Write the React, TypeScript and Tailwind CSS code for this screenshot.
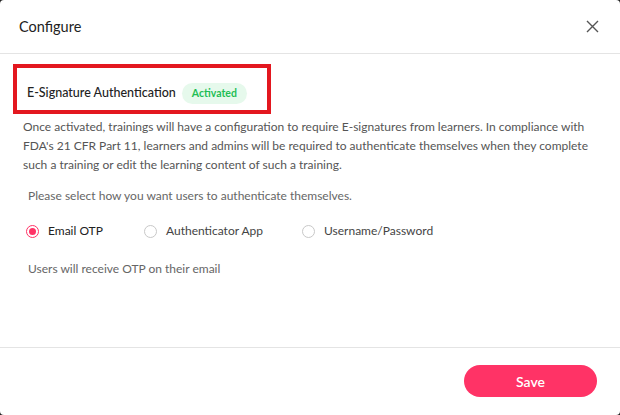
import React, { useState } from 'react';

const options = [
  { id: 'email', label: 'Email OTP', w: 'w-[118px]' },
  { id: 'app', label: 'Authenticator App', w: 'w-[158px]' },
  { id: 'user', label: 'Username/Password', w: 'w-auto' },
];

const Radio = ({ checked }: { checked: boolean }) => (
  <span
    className={`flex h-[13px] w-[13px] items-center justify-center rounded-full border ${
      checked ? 'border-[#ff3366]' : 'border-[#c8c8c8]'
    }`}
  >
    {checked && <span className="h-[7px] w-[7px] rounded-full bg-[#ff3366]" />}
  </span>
);

const App = () => {
  const [method, setMethod] = useState<string>('email');

  return (
    <div className="h-[415px] w-[620px] bg-[#222]">
      <div
        className="flex h-full w-full flex-col rounded-[4px] bg-white text-[#333]"
        style={{ fontFamily: 'Lato, "Open Sans", sans-serif' }}
      >
        {/* header */}
        <div className="flex h-[54px] items-center justify-between border-b border-[#e4e4e4] pl-[19px] pr-[20px]">
          <span className="text-[14.5px] text-[#222]">Configure</span>
          <svg width="13" height="13" viewBox="0 0 13 13" className="mr-[1px]">
            <path d="M1 1 L12 12 M12 1 L1 12" stroke="#555" strokeWidth="1.4" />
          </svg>
        </div>

        {/* body */}
        <div className="flex flex-1 flex-col pl-[13px] pr-[20px] pt-[10px]">
          <div className="flex h-[50px] w-[258px] items-center border-4 border-[#e3171f] pl-[10px] pt-[9px]">
            <span className="text-[12.5px] font-medium text-[#222]">E-Signature Authentication</span>
            <span className="ml-[6px] flex h-[21px] items-center rounded-full bg-[#e6f9ec] px-[10px] text-[10.5px] font-bold text-[#1fbe55]">
              Activated
            </span>
          </div>
          <p className="ml-[10px] mt-[3px] text-[12px] leading-[19px] text-[#555]">
            Once activated, trainings will have a configuration to require E-signatures from learners. In compliance with
            FDA's 21 CFR Part 11, learners and admins will be required to authenticate themselves when they complete
            such a training or edit the learning content of such a training.
          </p>
          <p className="ml-[15px] mt-[12px] text-[12px] leading-[19px] text-[#666]">
            Please select how you want users to authenticate themselves.
          </p>
          <div className="ml-[13px] mt-[17px] flex items-center">
            {options.map((o) => (
              <label
                key={o.id}
                className={`flex cursor-pointer items-center gap-[9px] ${o.w}`}
                onClick={() => setMethod(o.id)}
              >
                <Radio checked={method === o.id} />
                <span className={`text-[12px] ${method === o.id ? 'text-[#222]' : 'text-[#444]'}`}>{o.label}</span>
              </label>
            ))}
          </div>
          <p className="ml-[15px] mt-[19px] text-[12px] leading-[19px] text-[#666]">
            Users will receive OTP on their email
          </p>
        </div>

        {/* footer */}
        <div className="flex h-[68px] items-start justify-end border-t border-[#e4e4e4] pr-[23px] pt-[17px]">
          <button className="h-[32px] w-[133px] rounded-full bg-[#ff3366] text-[14px] font-semibold text-white">
            Save
          </button>
        </div>
      </div>
    </div>
  );
};

export default App;
